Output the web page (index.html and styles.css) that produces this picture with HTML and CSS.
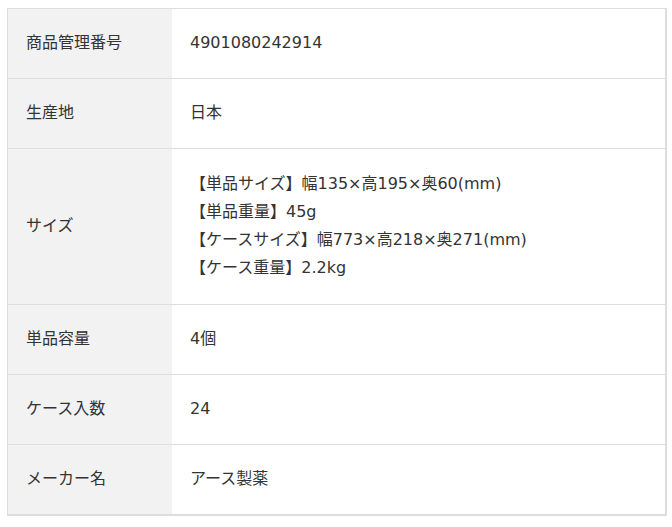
FILE: index.html
```html
<!DOCTYPE html>
<html lang="ja">
<head>
<meta charset="utf-8">
<link rel="stylesheet" href="styles.css">
</head>
<body>
<table class="spec">
  <tbody>
    <tr><th>商品管理番号</th><td>4901080242914</td></tr>
    <tr><th>生産地</th><td>日本</td></tr>
    <tr class="tall"><th>サイズ</th><td>【単品サイズ】幅135×高195×奥60(mm)<br>【単品重量】45g<br>【ケースサイズ】幅773×高218×奥271(mm)<br>【ケース重量】2.2kg</td></tr>
    <tr><th>単品容量</th><td>4個</td></tr>
    <tr><th>ケース入数</th><td>24</td></tr>
    <tr><th>メーカー名</th><td>アース製薬</td></tr>
  </tbody>
</table>
</body>
</html>
```
FILE: styles.css
```css
html, body {
  margin: 0;
  padding: 0;
  background: #ffffff;
}
body {
  padding: 8px 6px 0 7px;
  font-family: "DejaVu Sans", "Noto Sans CJK JP", sans-serif;
  font-size: 16px;
  color: #333333;
}
.spec {
  width: 660px;
  border-collapse: collapse;
  border: 2px solid #dddddd;
  border-left-width: 1px;
  border-top-width: 1px;
}
.spec th, .spec td {
  border-top: 1px solid #dddddd;
  border-bottom: 1px solid #dddddd;
  text-align: left;
  vertical-align: middle;
  font-weight: normal;
  line-height: 28px;
  padding: 20px 18px 21px;
}
.spec th {
  width: 128px;
  background: #f2f2f2;
}
.spec .tall td {
  padding: 21px 18px 22px;
}
```
